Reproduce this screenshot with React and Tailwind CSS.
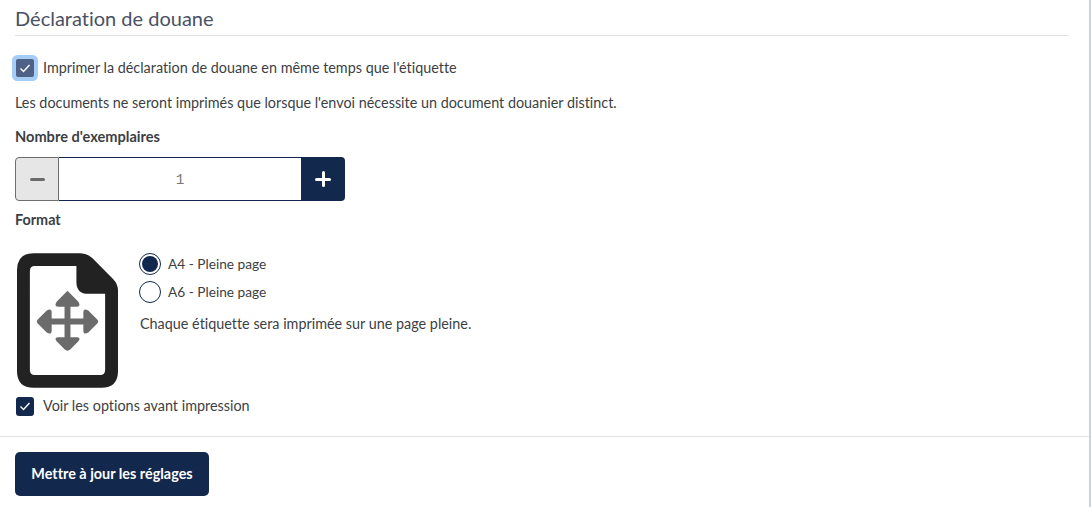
import React from 'react';

function Check({ className }) {
  return (
    <svg viewBox="0 0 12 12" className={className} fill="none" stroke="white" strokeWidth="1.4">
      <path d="M1.5 6.5 L4.5 9.5 L10.5 3" />
    </svg>
  );
}

function Radio({ checked, label }) {
  return (
    <div className="flex items-center gap-[7px] h-[28px]">
      <div className="w-[22px] h-[22px] rounded-full border border-[#12284c] bg-white flex items-center justify-center">
        {checked && <div className="w-[16px] h-[16px] rounded-full bg-[#12284c]" />}
      </div>
      <span className="text-[13.7px]">{label}</span>
    </div>
  );
}

function FileIcon() {
  return (
    <svg width="101" height="135" viewBox="0 0 102 136" className="shrink-0">
      <path
        fillRule="evenodd"
        fill="#222222"
        d="M17 0 H64 Q71 0 76 5 L97 26 Q102 31 102 38 V119 Q102 136 85 136 H17 Q0 136 0 119 V17 Q0 0 17 0 Z M18 13 Q13 13 13 18 V118 Q13 123 18 123 H84 Q89 123 89 118 V41 H72 Q60 41 60 29 V13 Z"
      />
      <path
        fill="#6b6b6b"
        d="M51 38 L62 49 Q65 54 60 54 H54 V66 H67 V60 Q67 55 72 58 L80 66 Q84 69 80 72 L72 80 Q67 83 67 78 V72 H54 V85 H60 Q65 85 62 89 L54 97 Q51 100 48 97 L40 89 Q37 85 42 85 H48 V72 H35 V78 Q35 83 30 80 L22 72 Q18 69 22 66 L30 58 Q35 55 35 60 V66 H48 V54 H42 Q37 54 40 49 Z"
      />
    </svg>
  );
}

export default function App() {
  return (
    <div className="w-[1091px] h-[507px] overflow-hidden bg-white border-r-2 border-[#ccd3e0] font-['Lato',sans-serif] text-[14.38px] text-[#3c3f44] [font-variant-ligatures:none]">
      <div className="pl-[15px] pr-[20px]">
        <h2 className="h-[36px] pt-[5px] border-b border-[#e2e2e2] text-[20px] leading-[27px] text-[#4a5163]">
          Déclaration de douane
        </h2>

        <div className="flex items-center gap-[9px] mt-[20px] ml-[1px] h-[24px]">
          <div className="w-[18px] h-[18px] rounded-[2px] bg-[#4f6186] ring-4 ring-[#a5cdf8] flex items-center justify-center">
            <Check className="w-[12px] h-[12px]" />
          </div>
          <span>Imprimer la déclaration de douane en même temps que l'étiquette</span>
        </div>

        <p className="mt-[13px] leading-[20px]">
          Les documents ne seront imprimés que lorsque l'envoi nécessite un document douanier distinct.
        </p>

        <div className="mt-[14px] font-bold text-[14.6px] leading-[20px]">Nombre d'exemplaires</div>

        <div className="flex w-[330px] h-[44px] mt-[10px]">
          <div className="w-[44px] bg-[#e6e6e6] border border-[#6e6e6e] rounded-l-[4px] flex items-center justify-center">
            <div className="w-[15px] h-[3px] bg-[#6b6b6b] rounded-sm" />
          </div>
          <div className="flex-1 border-y border-[#12284c] flex items-center justify-center pt-[3px] text-[#777777] font-['Liberation_Mono',monospace]">
            1
          </div>
          <div className="relative w-[44px] bg-[#12284c] rounded-r-[4px] flex items-center justify-center">
            <div className="w-[16px] h-[3px] bg-white rounded-sm" />
            <div className="absolute w-[3px] h-[16px] bg-white rounded-sm" />
          </div>
        </div>

        <div className="mt-[9px] font-bold leading-[20px]">Format</div>

        <div className="flex mt-[23px] pl-[2px] gap-[21px]">
          <FileIcon />
          <div className="-mt-[3px]">
            <Radio checked label="A4 - Pleine page" />
            <Radio label="A6 - Pleine page" />
            <p className="mt-[8px] pl-[1px] leading-[20px]">Chaque étiquette sera imprimée sur une page pleine.</p>
          </div>
        </div>

        <div className="flex items-center gap-[9px] mt-[8px] ml-[1px] h-[20px]">
          <div className="w-[18px] h-[19px] rounded-[3px] bg-[#12284c] flex items-center justify-center">
            <Check className="w-[12px] h-[12px]" />
          </div>
          <span>Voir les options avant impression</span>
        </div>
      </div>

      <div className="mt-[20px] border-t border-[#e4e4e4] pt-[15px] pl-[15px]">
        <button className="w-[194px] h-[44px] rounded-[5px] bg-[#12284c] text-white font-bold text-[14.4px]">
          Mettre à jour les réglages
        </button>
      </div>
    </div>
  );
}
